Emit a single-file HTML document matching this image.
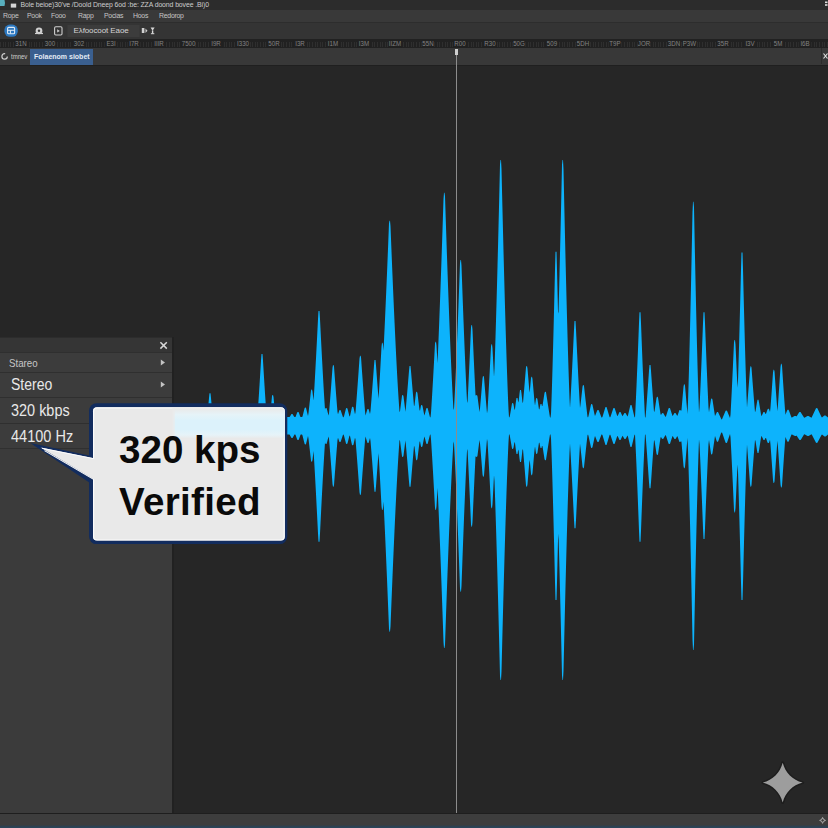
<!DOCTYPE html>
<html><head><meta charset="utf-8"><title>Audio</title>
<style>
html,body{margin:0;padding:0;}
body{width:828px;height:828px;overflow:hidden;background:#262626;font-family:"Liberation Sans",sans-serif;position:relative;}
.abs{position:absolute;}
#title{left:0;top:0;width:828px;height:10px;background:#2c2c2c;}
#title .t{position:absolute;left:20.5px;top:1.9px;font-size:6.9px;line-height:1;color:#cdcdcd;white-space:nowrap;letter-spacing:-0.1px;}
#menu{left:0;top:9.5px;width:828px;height:12px;background:#393939;}
#menu span{position:absolute;top:3.9px;font-size:6.9px;line-height:1;color:#c6c6c6;white-space:nowrap;letter-spacing:-0.25px;}
#tool{left:0;top:21.5px;width:828px;height:17px;background:#343434;border-top:1px solid #2d2d2d;box-sizing:border-box;}
#ruler{left:0;top:38.5px;width:828px;height:9.5px;background:#212121;overflow:hidden;}
#ruler span{background:#212121;position:absolute;top:1.2px;font-size:7.9px;transform:scaleX(0.78);line-height:1;color:#828282;width:16px;text-align:center;white-space:nowrap;}
#ruler .ticks{position:absolute;left:0;top:3px;width:828px;height:5.5px;background:repeating-linear-gradient(90deg,#3c3c3c 0 1px,transparent 1px 2.6px);opacity:.5;}
#tabs{left:0;top:48px;width:828px;height:16.5px;background:#383838;}
#tabs .sel{position:absolute;left:30px;top:1px;width:62.5px;height:15.5px;background:#3a5f8f;}
#tabs .sel span{position:absolute;left:3.7px;top:4px;font-size:8px;line-height:1;color:#e4ebf5;font-weight:bold;white-space:nowrap;transform:scaleX(0.875);transform-origin:0 0;}
#tabs .l{position:absolute;left:10.6px;top:5.4px;font-size:7.5px;line-height:1;color:#cfcfcf;white-space:nowrap;transform:scaleX(0.8);transform-origin:0 0;}
#sep{left:0;top:64.5px;width:828px;height:1.5px;background:#1f1f1f;}
#panel{left:0;top:337px;width:172px;height:476px;background:#3b3b3b;border-right:2.5px solid #212121;}
#panel .hd{position:absolute;left:0;top:0;width:172px;height:15px;background:#353535;border-top:1px solid #2c2c2c;box-sizing:border-box;}
#panel .row{position:absolute;left:0;width:172px;background:#3c3c3c;border-top:1px solid #2f2f2f;box-sizing:border-box;color:#e8e8e8;white-space:nowrap;}
#status{left:0;top:813px;width:828px;height:15px;background:linear-gradient(#1e1e1e 0,#1e1e1e 1.2px,#3d3d3d 1.2px,#3d3d3d 11.8px,#2c4152 13.6px,#2a465b 15px);}
#ph{left:455.6px;top:50px;width:1.6px;height:763px;background:#8c8c8c;}
#phh{left:454.6px;top:49.3px;width:3.8px;height:5.4px;background:#cfcfcf;}
.ct{position:absolute;left:119px;font-size:38.6px;font-weight:bold;color:#0a0a0a;line-height:1;white-space:nowrap;}
</style></head><body>
<div id="title" class="abs">
<svg class="abs" style="left:0;top:0" width="20" height="10"><path d="M0 0h4.5q1 3 0 6h-4.5z" fill="#58aebd"/><rect x="10.8" y="3.6" width="5.4" height="4" fill="#d6d6d6"/></svg>
<div class="t">Bole beioe)30've /Doold Dneep 6od :be: ZZA doond bovee .Bi)0</div>
<svg class="abs" style="left:823px;top:1px" width="5" height="6"><rect x="2" y="0.5" width="2.5" height="1.6" fill="#ddd"/><rect x="2" y="3.2" width="2.5" height="1.6" fill="#ddd"/></svg>
</div>
<div id="menu" class="abs"><span style="left:3px">Rope</span><span style="left:27px">Pook</span><span style="left:51px">Fooo</span><span style="left:78px">Rapp</span><span style="left:104px">Pocias</span><span style="left:133px">Hoos</span><span style="left:159px">Redorop</span></div>
<div id="tool" class="abs">
<svg class="abs" style="left:0;top:-0.7px" width="170" height="17">
<rect x="4.4" y="2.6" width="13.4" height="12.2" rx="5.5" fill="#2c78c0"/>
<rect x="7.6" y="5.4" width="7" height="6.4" rx="1" fill="none" stroke="#dfeaf6" stroke-width="1.1"/><path d="M7.6 8.3h7M10.4 8.3v3.4" stroke="#dfeaf6" stroke-width="1" fill="none"/>
<circle cx="39" cy="8.8" r="3.4" fill="#cfcfcf"/><circle cx="39" cy="8.8" r="1.2" fill="#343434"/><path d="M35 11.5h8" stroke="#cfcfcf" stroke-width="1.2"/>
<rect x="54.6" y="4.8" width="7.4" height="8.2" rx="1.2" fill="none" stroke="#cfcfcf" stroke-width="1.1"/><path d="M57.2 7.2l2.6 1.7l-2.6 1.7z" fill="#cfcfcf"/>
<rect x="67.5" y="3" width="72" height="12" fill="#3c3c3c"/>
<path d="M145.5 6.5l2 2.2l-2 2.2z" fill="#cfcfcf"/><rect x="141.8" y="6" width="2.6" height="5" fill="#cfcfcf"/>
<path d="M150.6 5.6h4l-2 3.2z" fill="#d8d8d8"/><rect x="151.9" y="8.4" width="1.4" height="3.2" fill="#d8d8d8"/><rect x="150.9" y="11.2" width="3.4" height="1" fill="#d8d8d8"/>
</svg>
<div class="abs" style="left:73.5px;top:3.4px;font-size:8px;line-height:10px;color:#d4d4d4;white-space:nowrap;letter-spacing:-0.1px;">E&lambda;foocoot Eaoe</div>
</div>
<div id="ruler" class="abs"><div class="ticks"></div><span style="left:13px">31N</span><span style="left:42px">300</span><span style="left:71px">302</span><span style="left:103px">E3I</span><span style="left:126px">I7R</span><span style="left:151px">IIIR</span><span style="left:179.5px">7500</span><span style="left:208px">I9R</span><span style="left:235px">I330</span><span style="left:265.5px">50R</span><span style="left:292px">I3R</span><span style="left:324.5px">I1M</span><span style="left:356px">I3M</span><span style="left:387px">IIZM</span><span style="left:420px">55N</span><span style="left:452px">R00</span><span style="left:482px">R30</span><span style="left:511px">50G</span><span style="left:543.5px">509</span><span style="left:575px">5DH</span><span style="left:607px">T9P</span><span style="left:636px">JOR</span><span style="left:666px">3DN</span><span style="left:681px">P3W</span><span style="left:714.5px">35R</span><span style="left:742px">I3V</span><span style="left:770px">5M</span><span style="left:797px">I6B</span></div>
<div id="tabs" class="abs"><svg class="abs" style="left:1px;top:4px" width="8" height="9"><circle cx="3.6" cy="4.4" r="2.7" fill="none" stroke="#d0d0d0" stroke-width="1.2" stroke-dasharray="13 4"/></svg><div class="l">tmnev</div><div class="sel"><span>Folaenom siobet</span></div>
<div class="abs" style="left:820.5px;top:0;width:1px;height:16px;background:#2c2c2c"></div>
<svg class="abs" style="left:823px;top:5px" width="5" height="7"><path d="M0.5 0.5l4 5M4.5 0.5l-4 5" stroke="#ddd" stroke-width="1.2"/></svg>
</div>
<div id="sep" class="abs"></div>

<div id="panel" class="abs">
<div class="hd"></div>
<svg class="abs" style="left:158px;top:3px" width="12" height="12"><path d="M2.4 2.2l6.4 6.4M8.8 2.2l-6.4 6.4" stroke="#d6d6d6" stroke-width="1.5"/></svg>
<div class="row" style="top:14.7px;height:21px;"><span style="position:absolute;left:9px;top:4.2px;font-size:11.6px;line-height:1;color:#c6c6c6;transform:scaleX(0.84);transform-origin:0 0;">Stareo</span><svg class="abs" style="left:160px;top:6px" width="6" height="8"><path d="M0.8 0.6l4.2 2.9l-4.2 2.9z" fill="#c4c4c4"/></svg></div>
<div class="row" style="top:35.4px;height:25px;"><span style="position:absolute;left:11.2px;top:2.9px;font-size:16.3px;line-height:1;transform:scaleX(0.86);transform-origin:0 0;">Stereo</span><svg class="abs" style="left:160px;top:7.5px" width="6" height="8"><path d="M0.8 0.6l4.2 2.9l-4.2 2.9z" fill="#c4c4c4"/></svg></div>
<div class="row" style="top:60.4px;height:26px;"><span style="position:absolute;left:11.2px;top:4.5px;font-size:15.6px;line-height:1;transform:scaleX(0.927);transform-origin:0 0;">320 kbps</span></div>
<div class="row" style="top:86.4px;height:25.4px;border-bottom:1px solid #303030;"><span style="position:absolute;left:11.2px;top:4.6px;font-size:15.6px;line-height:1;transform:scaleX(0.931);transform-origin:0 0;">44100 Hz</span></div>
</div>

<svg class="abs" style="left:0;top:0" width="828" height="828" viewBox="0 0 828 828">
<polygon points="173.0,417.0 207.0,417.0 207.5,414.8 208.5,403.6 209.0,397.9 209.5,393.3 210.5,393.3 211.0,397.9 212.0,409.3 212.5,414.8 213.0,417.0 257.0,417.1 257.5,415.4 258.0,408.3 258.5,400.8 259.5,385.3 260.5,369.1 261.0,360.7 261.5,354.0 262.5,354.0 263.0,360.7 264.0,377.2 265.0,393.2 265.5,400.8 266.0,408.3 266.5,415.4 267.0,417.1 269.5,417.1 270.0,417.0 271.5,401.4 272.0,396.1 272.5,395.0 273.0,395.0 273.5,397.1 275.0,413.0 275.5,417.1 289.5,417.1 290.0,416.5 291.0,414.7 291.5,414.0 292.5,414.0 294.0,416.5 294.5,417.1 295.5,417.1 297.0,413.1 297.5,412.0 298.5,412.0 299.0,413.1 300.0,415.9 300.5,417.1 302.0,417.1 302.5,416.5 304.5,408.4 305.0,407.6 305.5,407.6 306.0,408.0 308.0,416.1 308.5,413.0 310.0,399.6 311.0,390.4 311.5,389.5 312.0,389.5 312.5,391.4 313.5,400.5 314.0,393.9 314.5,385.4 315.0,376.6 316.0,358.2 317.0,339.0 318.0,319.1 318.5,311.0 319.5,311.0 320.0,319.1 321.0,339.0 322.0,358.2 323.0,376.6 323.5,385.4 324.0,393.9 324.5,402.0 325.0,409.6 325.5,408.0 326.5,408.0 327.0,409.6 328.5,415.4 329.0,413.2 330.0,400.9 331.0,387.9 332.0,374.6 332.5,367.7 333.0,365.0 333.5,365.0 334.0,366.4 335.0,380.0 336.0,393.2 337.0,405.9 337.5,412.0 338.0,414.3 339.0,411.2 339.5,410.0 340.5,410.0 341.0,411.2 342.5,415.8 343.0,417.2 343.5,417.2 344.0,416.2 346.0,408.4 346.5,408.0 347.0,408.0 347.5,408.8 349.5,416.5 350.0,416.0 352.0,407.1 352.5,406.7 353.0,406.7 353.5,407.6 355.0,414.2 355.5,412.3 356.5,399.8 357.5,386.5 358.5,372.7 359.5,358.6 360.0,355.7 360.5,355.7 361.0,357.1 362.0,371.3 363.0,385.1 364.0,398.5 365.0,411.1 365.5,415.6 367.0,410.4 367.5,409.0 368.5,409.0 369.0,410.4 370.0,413.9 370.5,411.1 371.5,398.7 372.5,385.8 373.5,372.4 374.0,365.5 374.5,360.0 375.5,360.0 376.0,365.5 377.0,379.1 378.0,392.3 378.5,398.7 379.0,391.5 380.0,374.0 381.0,355.8 381.5,346.5 382.0,342.7 382.5,342.7 383.0,344.6 383.5,350.7 384.0,340.5 384.5,330.0 385.0,319.2 385.5,308.1 386.0,296.7 386.5,285.0 387.0,273.2 388.0,248.7 389.0,223.3 389.5,220.7 390.0,220.7 390.5,225.9 391.5,251.2 392.5,275.6 393.0,287.4 393.5,299.0 394.0,310.3 394.5,321.3 395.0,332.1 395.5,342.6 396.0,352.7 396.5,362.5 397.0,371.9 397.5,380.9 398.0,389.5 398.5,397.5 399.0,405.1 399.5,412.0 400.0,411.3 402.0,395.8 402.5,395.0 403.0,395.0 403.5,396.6 405.0,408.2 405.5,411.7 406.5,400.5 407.5,388.9 409.0,370.9 409.5,366.0 410.5,366.0 411.0,370.9 412.5,388.9 413.5,400.5 414.0,406.2 414.5,405.2 416.0,392.6 416.5,391.7 417.0,391.7 417.5,393.4 419.0,406.0 419.5,410.1 420.0,410.7 421.0,405.5 421.5,405.0 422.0,405.0 422.5,406.0 424.0,413.7 424.5,415.4 426.0,409.6 426.5,408.0 427.5,408.0 428.0,409.6 430.0,417.2 430.5,417.2 431.0,412.7 431.5,404.9 432.0,396.9 433.0,379.9 434.0,362.0 435.0,343.6 435.5,341.7 436.0,341.7 436.5,345.4 437.0,354.7 437.5,363.3 438.0,351.8 438.5,339.9 439.0,327.4 439.5,314.6 440.0,301.3 440.5,287.7 441.0,273.7 441.5,259.4 442.0,244.8 442.5,229.8 443.0,214.6 443.5,199.0 444.0,192.7 444.5,192.7 445.0,195.9 445.5,211.5 446.0,226.8 446.5,241.8 447.0,256.5 447.5,270.9 448.0,284.9 448.5,298.6 449.0,312.0 449.5,324.9 450.0,337.4 450.5,349.5 451.0,361.1 451.5,372.2 452.0,382.7 452.5,392.6 453.0,401.7 453.5,410.1 454.0,408.3 454.5,399.0 455.0,389.0 455.5,378.3 456.0,367.1 456.5,355.4 457.0,343.2 457.5,330.7 458.0,317.8 458.5,304.5 459.0,290.9 459.5,277.0 460.0,262.9 460.5,260.0 461.0,260.0 461.5,265.7 462.0,279.8 462.5,293.7 463.0,307.2 463.5,320.4 464.0,333.2 464.5,345.7 465.0,357.7 465.5,369.4 466.0,380.5 466.5,391.0 467.0,400.9 467.5,402.9 468.0,393.1 468.5,382.9 469.0,372.3 469.5,361.5 470.0,350.3 471.0,327.3 471.5,325.0 472.0,325.0 472.5,329.7 473.5,352.6 474.0,363.7 474.5,374.5 475.0,385.0 475.5,395.1 476.0,395.8 476.5,395.0 477.0,395.0 477.5,396.6 479.5,412.1 480.0,408.6 481.0,396.8 482.5,378.5 483.0,376.0 483.5,376.0 484.0,377.2 485.5,395.6 486.5,407.4 487.0,413.2 487.5,410.5 488.0,402.1 488.5,393.4 489.0,384.4 490.0,365.7 491.0,346.3 491.5,344.3 492.0,344.3 492.5,348.2 493.5,367.6 494.0,377.0 494.5,368.3 495.0,353.2 495.5,337.3 496.0,320.6 496.5,303.1 497.0,285.0 497.5,266.3 498.0,246.9 498.5,227.1 499.0,206.7 499.5,185.7 500.0,164.3 500.5,160.0 501.0,160.0 501.5,168.7 502.0,190.0 502.5,210.8 503.0,231.1 503.5,250.9 504.0,270.1 504.5,288.7 505.0,306.7 505.5,324.0 506.0,340.5 506.5,356.3 507.0,371.2 507.5,385.1 508.0,397.9 508.5,409.3 509.0,417.3 509.5,417.3 510.0,415.0 512.0,403.6 512.5,403.0 513.0,403.0 513.5,404.2 514.5,409.9 515.0,408.9 516.0,401.1 516.5,398.0 517.5,398.0 518.0,401.1 518.5,402.6 519.5,393.6 520.0,390.0 521.0,390.0 521.5,393.6 522.5,402.6 523.0,402.8 524.0,391.3 525.5,373.3 526.0,367.2 526.5,366.0 527.0,366.0 527.5,368.5 529.0,386.6 529.5,392.5 530.0,389.3 531.0,377.9 531.5,376.7 532.0,376.7 532.5,379.0 534.0,396.1 534.5,401.7 535.0,405.4 536.0,398.7 536.5,398.0 537.0,398.0 537.5,399.4 539.0,409.4 539.5,409.0 540.0,406.2 540.5,404.0 541.5,404.0 542.0,406.2 542.5,405.8 544.5,393.0 545.0,391.7 545.5,391.7 546.0,392.3 548.5,408.3 549.5,414.5 550.0,417.4 550.5,417.4 551.0,413.7 551.5,400.3 552.0,384.9 552.5,368.2 553.0,350.2 553.5,331.3 554.0,311.4 554.5,290.7 555.0,269.3 555.5,251.7 556.5,251.7 557.0,269.3 557.5,290.7 558.0,311.4 558.5,313.4 559.0,294.2 559.5,274.2 560.0,253.6 560.5,232.3 561.0,210.3 561.5,187.8 562.0,164.7 562.5,160.0 563.0,160.0 563.5,169.4 564.0,192.3 564.5,214.8 565.0,236.6 565.5,257.8 566.0,278.3 566.5,298.1 567.0,317.1 567.5,335.3 568.0,352.6 568.5,368.9 569.0,384.1 569.5,398.0 570.0,408.1 570.5,399.4 571.0,390.3 571.5,380.9 572.0,371.1 573.0,350.8 574.0,329.7 574.5,321.0 575.5,321.0 576.0,329.7 577.0,350.8 578.0,371.1 578.5,380.9 579.0,390.3 579.5,399.4 580.0,408.1 580.5,404.7 582.0,391.4 582.5,386.8 583.0,385.0 583.5,385.0 584.0,385.9 585.5,399.4 587.0,412.5 587.5,416.7 588.0,417.4 588.5,416.0 591.0,404.5 591.5,404.0 592.0,404.0 592.5,404.9 594.5,414.2 595.0,416.1 597.0,411.0 597.5,410.0 598.5,410.0 599.0,411.0 601.5,417.4 602.0,417.4 602.5,416.7 605.0,408.4 605.5,407.0 606.5,407.0 607.0,408.4 609.5,416.7 610.0,417.4 610.5,416.8 613.0,409.2 613.5,408.0 614.5,408.0 615.0,409.2 617.0,415.3 617.5,416.3 619.0,412.9 619.5,412.0 620.5,412.0 622.5,416.3 624.0,413.7 624.5,413.0 625.5,413.0 627.5,416.5 628.0,415.2 630.0,406.7 630.5,405.0 631.5,405.0 632.0,406.7 634.5,417.3 635.0,417.3 635.5,407.7 636.0,397.1 636.5,385.9 637.0,374.1 637.5,361.9 638.0,349.3 638.5,336.3 639.0,323.1 639.5,312.3 640.5,312.3 641.0,323.1 641.5,336.3 642.0,349.3 642.5,361.9 643.0,374.1 643.5,385.9 644.0,397.1 644.5,407.7 645.0,417.3 645.5,417.5 646.0,411.7 647.0,398.6 648.0,384.9 649.0,370.8 649.5,365.0 650.5,365.0 651.0,370.8 652.0,384.9 653.0,398.6 654.0,411.7 654.5,411.5 656.5,398.1 657.0,396.7 657.5,396.7 658.0,397.4 660.0,410.8 660.5,414.1 661.0,415.0 662.0,413.2 663.0,413.0 663.5,413.4 665.5,417.0 666.0,416.2 668.5,408.6 669.0,408.0 669.5,408.0 670.0,408.3 672.5,415.9 673.0,415.6 674.0,413.7 674.5,413.0 675.5,413.0 677.0,415.6 677.5,415.8 679.0,411.2 679.5,410.0 680.5,410.0 681.0,411.2 681.5,409.7 682.5,398.3 683.5,386.7 684.0,384.3 684.5,384.3 685.0,385.5 686.5,402.9 687.5,414.1 688.0,401.7 688.5,386.1 689.0,368.6 689.5,349.6 690.0,329.3 690.5,307.8 691.0,285.3 691.5,261.8 692.0,237.3 692.5,212.0 693.0,201.7 693.5,201.7 694.0,206.9 694.5,232.3 695.0,256.9 695.5,280.7 696.0,303.4 696.5,325.1 697.0,345.7 697.5,364.9 698.0,382.7 698.5,398.8 699.0,412.6 699.5,407.7 700.0,397.1 700.5,385.9 701.0,374.1 701.5,361.9 702.0,349.3 702.5,336.3 703.0,323.1 703.5,312.3 704.5,312.3 705.0,323.1 705.5,336.3 706.0,349.3 706.5,361.9 707.0,374.1 707.5,385.9 708.0,397.1 708.5,407.7 709.0,412.2 711.0,399.2 711.5,398.5 712.0,398.5 712.5,399.8 714.5,412.9 715.0,416.1 716.5,412.9 717.0,412.0 718.0,412.0 721.5,419.6 722.0,419.3 725.5,411.0 726.0,410.5 727.0,410.7 730.0,417.9 730.5,414.8 731.0,405.6 731.5,395.9 732.0,385.8 732.5,375.3 733.0,364.5 734.0,342.3 734.5,340.0 735.0,340.0 735.5,344.5 736.5,366.7 737.0,377.4 737.5,387.8 738.0,380.6 738.5,364.3 739.0,346.9 739.5,328.7 740.0,309.6 740.5,289.8 741.0,269.3 741.5,252.5 742.5,252.5 743.0,269.3 743.5,289.8 744.0,309.6 744.5,328.7 745.0,346.9 745.5,364.3 746.0,380.6 746.5,395.7 747.0,407.4 748.0,395.0 749.0,382.2 750.0,369.0 750.5,366.3 751.0,366.3 751.5,367.6 752.5,380.9 753.5,393.7 754.5,406.2 755.0,412.1 755.5,411.3 757.0,402.2 757.5,399.7 758.5,399.7 759.0,402.2 761.0,414.3 761.5,416.3 763.0,412.9 763.5,412.0 764.5,412.0 765.5,414.0 766.0,413.8 767.5,409.4 768.0,408.8 768.5,408.8 769.0,409.1 770.0,412.1 770.5,407.4 771.5,393.9 772.5,379.8 773.0,372.6 773.5,369.7 774.0,369.7 774.5,371.2 775.5,385.5 776.5,399.3 777.0,406.1 777.5,411.2 778.5,397.0 779.5,382.2 780.5,366.9 781.0,363.8 781.5,363.8 782.0,365.4 783.0,380.7 784.0,395.6 785.0,409.8 785.5,414.8 787.0,410.8 787.5,409.7 788.5,409.7 789.0,410.8 791.5,417.4 792.0,417.6 794.5,416.1 795.5,416.0 796.0,416.1 796.5,416.4 797.0,415.8 799.0,412.6 799.5,412.0 800.5,412.0 804.0,417.4 804.5,417.8 807.0,416.2 807.5,416.0 808.5,416.0 811.5,417.8 816.0,408.2 817.0,408.0 817.5,408.4 821.5,417.1 822.0,417.5 824.0,415.8 824.5,415.5 825.5,415.5 828.0,417.5 828.0,434.5 826.0,436.2 825.5,436.5 824.5,436.5 822.0,434.5 821.5,434.9 817.5,442.6 817.0,443.0 816.0,442.8 812.0,435.1 811.5,434.2 809.0,435.8 808.5,436.0 807.5,436.0 804.5,434.2 804.0,434.6 801.0,439.4 800.5,440.0 799.5,440.0 797.0,436.2 796.5,435.6 796.0,435.9 795.0,436.0 792.0,434.4 791.5,434.6 789.0,440.7 788.5,441.7 787.5,441.7 787.0,440.7 785.5,437.0 785.0,442.1 784.0,456.1 783.0,470.8 782.0,486.0 781.5,487.5 781.0,487.5 780.5,484.4 779.5,469.3 778.5,454.7 777.5,440.8 777.0,446.1 776.0,459.9 775.0,474.2 774.5,481.5 774.0,483.0 773.5,483.0 773.0,480.1 772.0,465.6 771.0,451.5 770.5,444.7 770.0,439.8 769.0,442.7 768.5,443.0 768.0,443.0 767.5,442.4 766.0,438.1 765.5,438.0 764.5,440.0 763.5,440.0 761.5,435.7 761.0,437.8 759.0,450.4 758.5,453.0 757.5,453.0 757.0,450.4 755.5,440.9 755.0,439.9 754.0,452.3 753.0,465.2 752.0,478.5 751.5,485.3 751.0,486.7 750.5,486.7 750.0,484.0 749.0,470.5 748.0,457.4 747.0,444.8 746.5,456.3 746.0,471.4 745.5,487.8 745.0,505.2 744.5,523.6 744.0,542.7 743.5,562.6 743.0,583.1 742.5,600.0 741.5,600.0 741.0,583.1 740.5,562.6 740.0,542.7 739.5,523.6 739.0,505.2 738.5,487.8 738.0,471.4 737.5,464.4 737.0,474.9 736.5,485.6 735.5,507.9 735.0,512.5 734.5,512.5 734.0,510.2 733.0,487.8 732.5,477.0 732.0,466.4 731.5,456.2 731.0,446.4 730.5,437.2 730.0,434.0 727.0,442.7 726.5,443.0 726.0,443.0 725.5,442.4 722.5,433.8 722.0,432.5 721.5,432.5 721.0,433.2 718.5,440.5 718.0,441.7 717.0,441.7 716.5,440.5 715.0,436.1 713.5,446.2 712.5,453.1 712.0,454.5 711.5,454.5 711.0,453.8 709.0,440.0 708.5,444.3 708.0,454.8 707.5,466.0 707.0,477.7 706.5,489.8 706.0,502.3 705.5,515.1 705.0,528.3 704.5,539.0 703.5,539.0 703.0,528.3 702.5,515.1 702.0,502.3 701.5,489.8 701.0,477.7 700.5,466.0 700.0,454.8 699.5,444.3 699.0,439.4 698.5,453.2 698.0,469.2 697.5,487.0 697.0,506.2 696.5,526.8 696.0,548.4 695.5,571.1 695.0,594.8 694.5,619.4 694.0,644.8 693.5,650.0 693.0,650.0 692.5,639.7 692.0,614.4 691.5,590.0 691.0,566.5 690.5,544.0 690.0,522.6 689.5,502.3 689.0,483.3 688.5,465.9 688.0,450.2 687.5,438.0 686.5,449.3 685.0,467.1 684.5,468.3 684.0,468.3 683.5,465.9 682.0,448.2 681.5,442.5 681.0,440.8 680.5,442.0 679.5,442.0 679.0,440.8 677.5,436.2 677.0,436.4 676.0,438.3 675.5,439.0 674.5,439.0 673.0,436.4 672.5,436.1 670.0,443.7 669.5,444.0 669.0,444.0 668.5,443.4 666.0,435.8 665.5,435.0 663.5,438.6 663.0,439.0 662.0,438.8 661.0,437.0 660.5,437.8 658.0,454.3 657.5,455.0 657.0,455.0 656.5,453.7 654.5,440.4 654.0,440.4 653.0,453.8 652.0,467.9 651.0,482.4 650.5,488.3 649.5,488.3 649.0,482.4 648.0,467.9 647.0,453.8 646.0,440.4 645.5,434.5 645.0,434.7 644.5,444.4 644.0,455.2 643.5,466.6 643.0,478.6 642.5,491.1 642.0,503.9 641.5,517.1 641.0,530.7 640.5,541.7 639.5,541.7 639.0,530.7 638.5,517.1 638.0,503.9 637.5,491.1 637.0,478.6 636.5,466.6 636.0,455.2 635.5,444.4 635.0,434.7 634.5,434.7 632.0,445.3 631.5,447.0 630.5,447.0 630.0,445.3 628.0,436.8 627.5,435.5 626.0,438.3 625.5,439.0 624.5,439.0 623.0,436.4 622.5,435.7 621.0,439.1 620.5,440.0 619.5,440.0 617.5,435.7 617.0,436.7 615.0,442.8 614.5,444.0 613.5,444.0 613.0,442.8 610.5,435.2 610.0,434.5 609.5,435.3 607.0,443.6 606.5,445.0 605.5,445.0 605.0,443.6 602.5,435.3 602.0,434.5 601.5,434.6 599.0,441.0 598.5,442.0 597.5,442.0 597.0,441.0 595.0,435.9 594.5,437.8 592.5,447.1 592.0,448.0 591.5,448.0 591.0,447.5 588.5,436.0 588.0,434.5 587.5,435.3 586.5,444.1 585.0,457.9 584.0,467.3 583.5,468.3 583.0,468.3 582.5,466.4 581.0,452.3 580.5,447.8 580.0,443.8 579.5,452.2 579.0,461.1 578.5,470.2 578.0,479.7 577.0,499.4 576.0,519.9 575.5,528.3 574.5,528.3 574.0,519.9 573.0,499.4 572.0,479.7 571.5,470.2 571.0,461.1 570.5,452.2 570.0,443.8 569.5,453.0 569.0,466.3 568.5,480.7 568.0,496.3 567.5,512.8 567.0,530.2 566.5,548.3 566.0,567.2 565.5,586.8 565.0,607.0 564.5,627.8 564.0,649.2 563.5,671.1 563.0,680.0 562.5,680.0 562.0,675.5 561.5,653.5 561.0,632.0 560.5,611.1 560.0,590.8 559.5,571.1 559.0,552.0 558.5,533.7 558.0,540.4 557.5,561.1 557.0,582.4 556.5,600.0 555.5,600.0 555.0,582.4 554.5,561.1 554.0,540.4 553.5,520.6 553.0,501.7 552.5,483.8 552.0,467.0 551.5,451.7 551.0,438.3 550.5,434.5 550.0,434.5 548.5,443.7 546.0,459.7 545.5,460.3 545.0,460.3 544.5,459.0 542.5,446.2 542.0,445.8 541.5,448.0 540.5,448.0 540.0,445.8 539.5,443.0 539.0,442.6 537.5,452.6 537.0,454.0 536.5,454.0 536.0,453.3 535.0,446.6 534.5,450.3 533.0,467.2 532.5,473.0 532.0,475.3 531.5,475.3 531.0,474.1 530.0,462.7 529.5,459.9 528.0,478.0 527.5,484.2 527.0,486.7 526.5,486.7 526.0,485.5 524.5,467.0 523.5,455.2 523.0,449.4 522.5,449.4 521.5,458.4 521.0,462.0 520.0,462.0 519.5,458.4 518.5,449.4 518.0,450.9 517.5,454.0 516.5,454.0 516.0,450.9 515.0,443.1 514.5,442.1 513.5,447.8 513.0,449.0 512.5,449.0 512.0,448.4 510.0,437.0 509.5,434.5 509.0,434.5 508.5,442.2 508.0,453.1 507.5,465.3 507.0,478.6 506.5,492.8 506.0,507.8 505.5,523.6 505.0,540.2 504.5,557.3 504.0,575.1 503.5,593.4 503.0,612.2 502.5,631.6 502.0,651.4 501.5,671.7 501.0,680.0 500.5,680.0 500.0,675.9 499.5,655.5 499.0,635.5 498.5,616.1 498.0,597.1 497.5,578.7 497.0,560.8 496.5,543.5 496.0,526.9 495.5,510.9 495.0,495.7 494.5,481.3 494.0,475.3 493.0,494.5 492.5,504.3 492.0,508.3 491.5,508.3 491.0,506.3 490.0,486.7 489.0,467.8 488.5,458.8 488.0,450.0 487.5,441.6 487.0,438.9 486.0,450.7 485.0,462.9 484.0,475.4 483.5,476.7 483.0,476.7 482.5,474.2 481.5,461.6 480.5,449.5 480.0,443.5 479.5,439.9 477.5,455.4 477.0,457.0 476.5,457.0 476.0,456.2 475.5,456.8 475.0,466.9 474.5,477.4 474.0,488.2 473.5,499.2 472.5,522.0 472.0,526.7 471.5,526.7 471.0,524.4 470.0,501.5 469.5,490.4 469.0,479.5 468.5,469.0 468.0,458.8 467.5,449.1 467.0,451.0 466.5,460.9 466.0,471.5 465.5,482.6 465.0,494.2 464.5,506.2 464.0,518.6 463.5,531.5 463.0,544.6 462.5,558.1 462.0,571.9 461.5,586.0 461.0,591.7 460.5,591.7 460.0,588.8 459.5,574.7 459.0,560.8 458.5,547.3 458.0,534.1 457.5,521.2 457.0,508.7 456.5,496.5 456.0,484.8 455.5,473.6 455.0,463.0 454.5,453.0 454.0,443.7 453.5,441.4 453.0,449.3 452.5,458.1 452.0,467.5 451.5,477.5 451.0,488.0 450.5,499.1 450.0,510.5 449.5,522.4 449.0,534.7 448.5,547.4 448.0,560.4 447.5,573.7 447.0,587.4 446.5,601.4 446.0,615.6 445.5,630.2 445.0,645.0 444.5,648.0 444.0,648.0 443.5,642.0 443.0,627.2 442.5,612.8 442.0,598.5 441.5,584.6 441.0,571.0 440.5,557.7 440.0,544.8 439.5,532.2 439.0,520.0 438.5,508.2 438.0,496.8 437.5,487.9 436.5,506.3 436.0,510.0 435.5,510.0 435.0,508.1 434.0,489.7 433.0,472.0 432.0,455.1 431.5,447.0 431.0,439.3 430.5,434.5 430.0,434.7 428.0,442.4 427.5,444.0 426.5,444.0 426.0,442.4 424.5,436.6 424.0,438.3 422.5,446.0 422.0,447.0 421.5,447.0 421.0,446.5 420.0,441.3 419.5,441.9 417.5,458.6 417.0,460.3 416.5,460.3 416.0,459.4 414.5,446.8 414.0,446.0 413.0,457.5 412.0,469.5 411.0,481.7 410.5,486.7 409.5,486.7 409.0,481.7 407.5,463.4 406.5,451.7 405.5,440.4 405.0,443.8 403.5,455.4 403.0,457.0 402.5,457.0 402.0,456.2 400.0,440.7 399.5,440.0 399.0,446.9 398.5,454.5 398.0,462.6 397.5,471.2 397.0,480.2 396.5,489.6 396.0,499.4 395.5,509.6 395.0,520.0 394.5,530.8 394.0,541.9 393.5,553.2 393.0,564.8 392.5,576.7 391.5,601.2 390.5,626.5 390.0,631.7 389.5,631.7 389.0,629.1 388.0,603.7 387.0,579.1 386.5,567.2 386.0,555.5 385.5,544.1 385.0,533.0 384.5,522.2 384.0,511.6 383.5,501.4 383.0,508.1 382.5,510.0 382.0,510.0 381.5,506.2 380.5,487.5 379.5,469.4 379.0,460.7 378.5,453.2 377.5,466.1 376.5,479.4 376.0,486.2 375.5,491.7 374.5,491.7 374.0,486.2 373.0,472.7 372.0,459.6 371.0,446.9 370.5,440.9 370.0,438.1 369.0,441.6 368.5,443.0 367.5,443.0 367.0,441.6 365.5,436.4 365.0,440.8 364.0,453.2 363.0,466.2 362.0,479.7 361.0,493.6 360.5,495.0 360.0,495.0 359.5,492.2 358.5,478.4 357.5,464.9 356.5,451.9 355.5,439.6 355.0,437.8 353.5,444.4 353.0,445.3 352.5,445.3 352.0,444.9 350.0,436.0 349.5,435.5 347.5,443.2 347.0,444.0 346.5,444.0 346.0,443.6 344.0,435.8 343.5,434.5 343.0,434.7 341.0,440.8 340.5,442.0 339.5,442.0 339.0,440.8 338.0,437.7 337.5,439.9 336.5,452.3 335.5,465.2 334.5,478.5 334.0,485.3 333.5,486.7 333.0,486.7 332.5,484.0 331.5,470.5 330.5,457.4 329.5,444.8 329.0,438.7 328.5,436.6 327.0,442.4 326.5,444.0 325.5,444.0 325.0,442.4 324.5,450.0 324.0,458.2 323.5,466.8 323.0,475.6 322.0,494.1 321.0,513.4 320.0,533.5 319.5,541.7 318.5,541.7 318.0,533.5 317.0,513.4 316.0,494.1 315.0,475.6 314.5,466.8 314.0,458.2 313.5,451.0 312.5,459.9 312.0,461.7 311.5,461.7 311.0,460.8 309.5,447.5 308.5,438.8 308.0,435.9 306.0,444.0 305.5,444.4 305.0,444.4 304.5,443.6 302.5,435.5 302.0,434.5 301.0,434.5 300.5,434.7 299.0,438.9 298.5,440.0 297.5,440.0 297.0,438.9 295.5,434.7 295.0,434.5 294.5,434.6 293.0,437.3 292.5,438.0 291.5,438.0 289.5,434.6 275.5,434.5 275.0,439.0 273.5,454.9 273.0,457.0 272.5,457.0 272.0,455.9 270.5,440.1 270.0,435.0 269.5,434.5 267.0,434.5 266.5,436.6 266.0,443.7 265.5,451.2 264.5,466.7 263.5,482.9 263.0,491.3 262.5,498.0 261.5,498.0 261.0,491.3 260.0,474.8 259.0,458.8 258.5,451.2 258.0,443.7 257.5,436.6 257.0,434.5 213.0,434.5 212.5,437.2 211.5,448.4 211.0,454.1 210.5,458.7 209.5,458.7 209.0,454.1 208.0,442.7 207.5,437.2 207.0,434.5 173.0,434.5" fill="#0db3fc"/>
</svg>
<div id="ph" class="abs"></div><div id="phh" class="abs"></div>

<svg class="abs" style="left:0;top:0" width="828" height="828" viewBox="0 0 828 828">
<defs><linearGradient id="pg" gradientUnits="userSpaceOnUse" x1="0" y1="408.5" x2="0" y2="438.5"><stop offset="0" stop-color="#e9e9e9"/><stop offset="0.2" stop-color="#e6f3f8"/><stop offset="0.4" stop-color="#dcf2fb"/><stop offset="0.7" stop-color="#dcf2fb"/><stop offset="0.88" stop-color="#e6f3f8"/><stop offset="1" stop-color="#e9e9e9"/></linearGradient><clipPath id="cb"><rect x="173" y="408" width="120" height="32"/></clipPath><clipPath id="cc"><rect x="93" y="407.3" width="191.4" height="133.7" rx="4"/></clipPath></defs>
<path d="M30.3 443L90 455.7V483z" fill="#122c5e"/>
<rect x="89" y="403.3" width="198.3" height="140.8" rx="7.5" fill="#122c5e"/>
<rect x="93" y="407.3" width="191.8" height="133.3" rx="4" fill="#e9e9e9" />
<rect x="93.6" y="407.9" width="190.6" height="132.1" rx="3.5" fill="none" stroke="#fbfbfb" stroke-width="1.2"/>
<path d="M40.5 447.5L95 458.4V480z" fill="#e9e9e9"/><path d="M42 448.3L94 458.8M44.5 450.6L94 479.6" stroke="#fbfbfb" stroke-width="1.1" fill="none"/><path d="M92.4 459.3h3.4v19.4h-3.4z" fill="#e9e9e9"/>
<g clip-path="url(#cc)"><rect x="173.5" y="408.5" width="112" height="30" fill="url(#pg)"/><rect x="172" y="408" width="3" height="31" fill="#ebebeb" opacity="0.6"/></g>
</svg>
<div class="ct" style="top:430.9px;">320 kps</div>
<div class="ct" style="top:482.9px;letter-spacing:0.32px;">Verified</div>

<svg class="abs" style="left:760px;top:760px" width="46" height="46" viewBox="-23 -23 46 46"><path d="M0 -19.9C2.6 -9.9 9.9 -2.6 19.9 0C9.9 2.6 2.6 9.9 0 19.9C-2.6 9.9 -9.9 2.6 -19.9 0C-9.9 -2.6 -2.6 -9.9 0 -19.9Z" transform="translate(-0.3,-0.4)" fill="#9d9d9d" stroke="#1d1d1d" stroke-width="3" stroke-linejoin="round" paint-order="stroke"/></svg>
<div id="status" class="abs"></div>
<svg class="abs" style="left:818px;top:816px" width="9" height="9"><circle cx="4.6" cy="4.4" r="1.8" fill="none" stroke="#b8b8b8" stroke-width="1"/><path d="M4.6 1.2v1.2M4.6 6.4v1.2M1.4 4.4h1.2M6.6 4.4h1.2" stroke="#b8b8b8" stroke-width="0.9"/></svg>
</body></html>
